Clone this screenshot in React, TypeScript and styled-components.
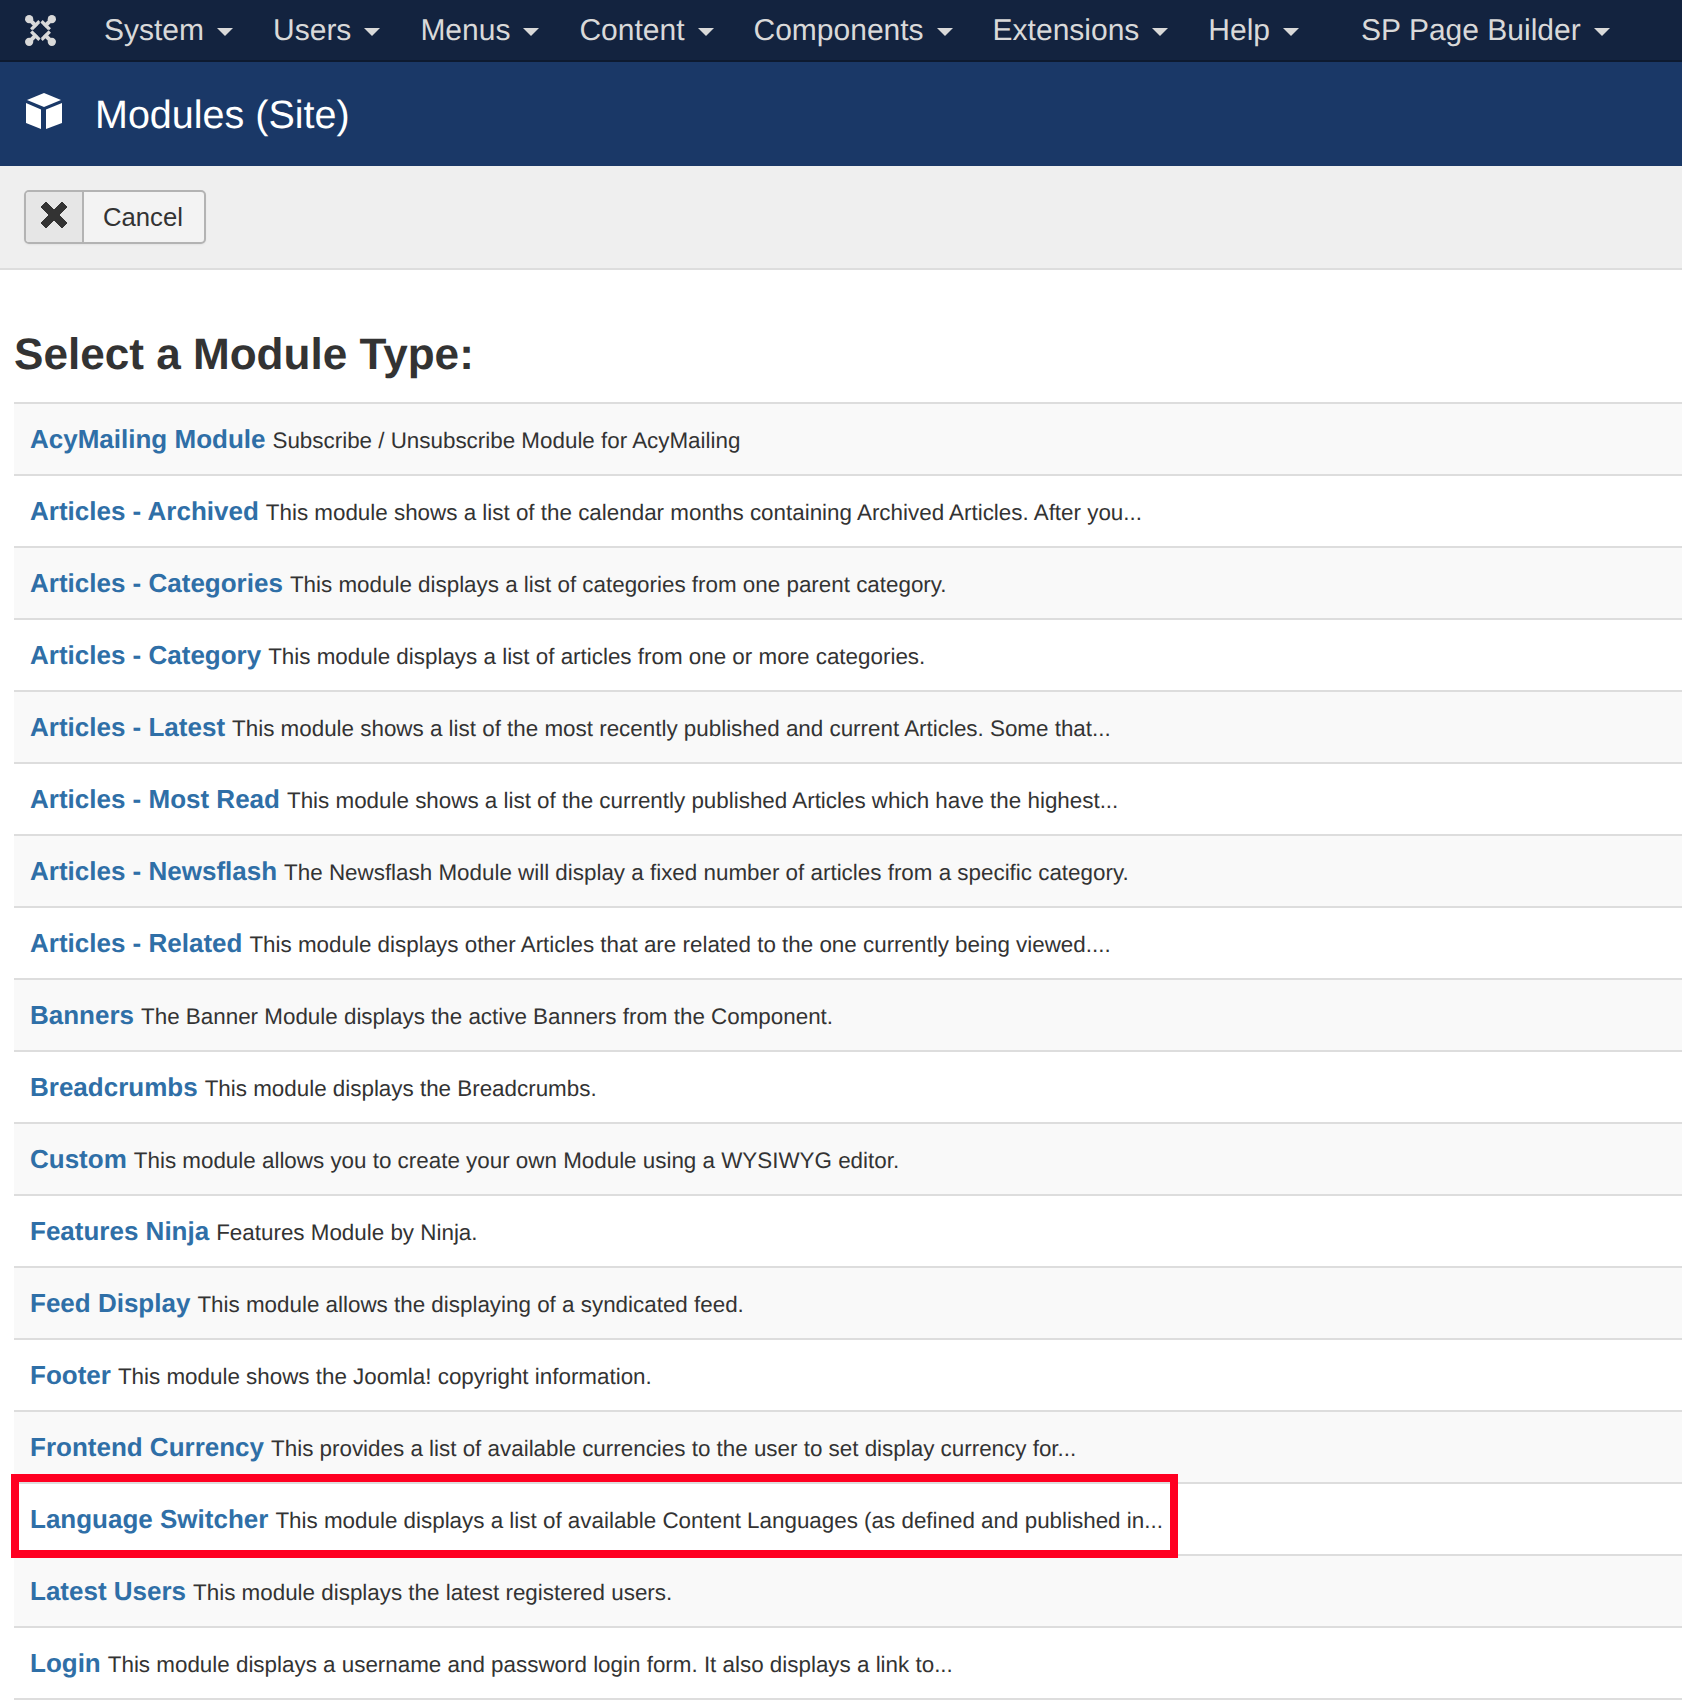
import styled, { createGlobalStyle } from 'styled-components';

const modules = [
  ['AcyMailing Module', 'Subscribe / Unsubscribe Module for AcyMailing'],
  ['Articles - Archived', 'This module shows a list of the calendar months containing Archived Articles. After you...'],
  ['Articles - Categories', 'This module displays a list of categories from one parent category.'],
  ['Articles - Category', 'This module displays a list of articles from one or more categories.'],
  ['Articles - Latest', 'This module shows a list of the most recently published and current Articles. Some that...'],
  ['Articles - Most Read', 'This module shows a list of the currently published Articles which have the highest...'],
  ['Articles - Newsflash', 'The Newsflash Module will display a fixed number of articles from a specific category.'],
  ['Articles - Related', 'This module displays other Articles that are related to the one currently being viewed....'],
  ['Banners', 'The Banner Module displays the active Banners from the Component.'],
  ['Breadcrumbs', 'This module displays the Breadcrumbs.'],
  ['Custom', 'This module allows you to create your own Module using a WYSIWYG editor.'],
  ['Features Ninja', 'Features Module by Ninja.'],
  ['Feed Display', 'This module allows the displaying of a syndicated feed.'],
  ['Footer', 'This module shows the Joomla! copyright information.'],
  ['Frontend Currency', 'This provides a list of available currencies to the user to set display currency for...'],
  ['Language Switcher', 'This module displays a list of available Content Languages (as defined and published in...'],
  ['Latest Users', 'This module displays the latest registered users.'],
  ['Login', 'This module displays a username and password login form. It also displays a link to...'],
];

const menus = ['System', 'Users', 'Menus', 'Content', 'Components', 'Extensions', 'Help'];

const GlobalStyle = createGlobalStyle`
  html, body {
    margin: 0;
    padding: 0;
    background: #fff;
    font-family: 'Liberation Sans', Arial, sans-serif;
    color: #333;
    text-rendering: geometricPrecision;
  }
`;

const Page = styled.div`
  width: 1682px;
  height: 1700px;
  overflow: hidden;
`;

const NavBar = styled.nav`
  display: flex;
  align-items: center;
  height: 60px;
  padding-left: 24px;
  background: #13233f;
  border-bottom: 2px solid #0d1a30;
`;

const Logo = styled.svg`
  width: 33px;
  height: 33px;
  margin-right: 27px;
  flex: none;
`;

const NavItem = styled.a<{ $spaced?: boolean }>`
  display: flex;
  align-items: center;
  padding: 2px 20px 0;
  margin-left: ${({ $spaced }) => ($spaced ? '22px' : '0')};
  font-size: 30px;
  color: #d9d9d9;
  white-space: nowrap;

  &::after {
    content: '';
    margin-left: 13px;
    margin-top: 1px;
    border-top: 8px solid #d9d9d9;
    border-left: 8px solid transparent;
    border-right: 8px solid transparent;
  }
`;

const TitleBar = styled.header`
  display: flex;
  align-items: center;
  height: 104px;
  padding-left: 26px;
  background: #1a3867;
`;

const CubeIcon = styled.svg`
  width: 36px;
  height: 36px;
  margin-right: 33px;
  margin-top: -6px;
  flex: none;
`;

const PageTitle = styled.h1`
  margin: 2px 0 0;
  font-size: 39.5px;
  font-weight: 400;
  color: #fff;
`;

const Toolbar = styled.div`
  display: flex;
  align-items: center;
  box-sizing: border-box;
  height: 104px;
  padding: 0 24px;
  background: #efefef;
  border-bottom: 2px solid #ddd;
`;

const CancelButton = styled.button`
  display: flex;
  align-items: stretch;
  box-sizing: border-box;
  height: 54px;
  width: 182px;
  padding: 0;
  background: #f3f3f3;
  border: 2px solid #b3b3b3;
  border-radius: 5px;
  font-family: inherit;
  font-size: 25.7px;
  color: #333;
  box-shadow: 0 1px 2px rgba(0, 0, 0, 0.05);
`;

const ButtonIcon = styled.span`
  display: flex;
  align-items: center;
  justify-content: center;
  width: 56px;
  padding-bottom: 4px;
  background: #e6e6e6;
  border-right: 2px solid #b3b3b3;
  border-radius: 3px 0 0 3px;
  flex: none;
`;

const ButtonLabel = styled.span`
  display: flex;
  align-items: center;
  padding-left: 19px;
`;

const Content = styled.main`
  padding-left: 14px;
`;

const Heading = styled.h2`
  margin: 0;
  padding-top: 60px;
  height: 72px;
  font-size: 44.1px;
  line-height: 50px;
  font-weight: 700;
  color: #333;
`;

const ModuleList = styled.ul`
  margin: 0;
  padding: 0;
  list-style: none;
`;

const ModuleRow = styled.li`
  position: relative;
  box-sizing: border-box;
  height: 72px;
  padding-left: 16px;
  border-top: 2px solid #ddd;
  line-height: 70px;
  white-space: nowrap;

  &:nth-child(odd) {
    background: #f9f9f9;
  }

  &:last-child {
    height: 74px;
    border-bottom: 2px solid #ddd;
  }
`;

const ModuleName = styled.a`
  font-size: 26px;
  font-weight: 700;
  color: #2f6fa7;
`;

const ModuleDescription = styled.span`
  margin-left: 7px;
  font-size: 22.4px;
  color: #333;
`;

const Highlight = styled.div`
  position: absolute;
  z-index: 1;
  left: -3px;
  top: -10px;
  width: 1167px;
  height: 84px;
  box-sizing: border-box;
  border: 8px solid #ff0022;
  pointer-events: none;
`;

export default function App() {
  return (
    <Page>
      <GlobalStyle />
      <NavBar>
        <Logo viewBox="0 0 32 32" fill="none">
          {[0, 90, 180, 270].map((angle) => (
            <g key={angle} transform={`rotate(${angle} 16 16)`}>
              <path d="M6.5 15.5 15.5 6.5" stroke="#13233f" strokeWidth="4.4" />
              <path d="M7 15 15 7" stroke="#d9d9d9" strokeWidth="3.2" />
              <path d="M5 5 12 12" stroke="#d9d9d9" strokeWidth="4" />
              <circle cx="5" cy="5" r="4" fill="#d9d9d9" />
            </g>
          ))}
        </Logo>
        {menus.map((menu) => (
          <NavItem key={menu}>{menu}</NavItem>
        ))}
        <NavItem $spaced>SP Page Builder</NavItem>
      </NavBar>
      <TitleBar>
        <CubeIcon viewBox="0 0 36 36">
          <path fill="#fff" d="M18 0 35 7 18 14 1 7Z" />
          <path fill="#fff" d="M0 10 15 16.5V36L0 30Z" />
          <path fill="#fff" d="M36 10 20 16.5V36L36 30Z" />
        </CubeIcon>
        <PageTitle>Modules (Site)</PageTitle>
      </TitleBar>
      <Toolbar>
        <CancelButton>
          <ButtonIcon>
            <svg width="28" height="28" viewBox="0 0 28 28">
              <path
                fill="#333"
                d="M6 1 14 9 22 1 27 6 19 14 27 22 22 27 14 19 6 27 1 22 9 14 1 6Z"
                stroke="#333"
                strokeWidth="1"
                strokeLinejoin="round"
              />
            </svg>
          </ButtonIcon>
          <ButtonLabel>Cancel</ButtonLabel>
        </CancelButton>
      </Toolbar>
      <Content>
        <Heading>Select a Module Type:</Heading>
        <ModuleList>
          {modules.map(([name, description]) => (
            <ModuleRow key={name}>
              <ModuleName>{name}</ModuleName>
              <ModuleDescription>{description}</ModuleDescription>
              {name === 'Language Switcher' && <Highlight />}
            </ModuleRow>
          ))}
        </ModuleList>
      </Content>
    </Page>
  );
}
